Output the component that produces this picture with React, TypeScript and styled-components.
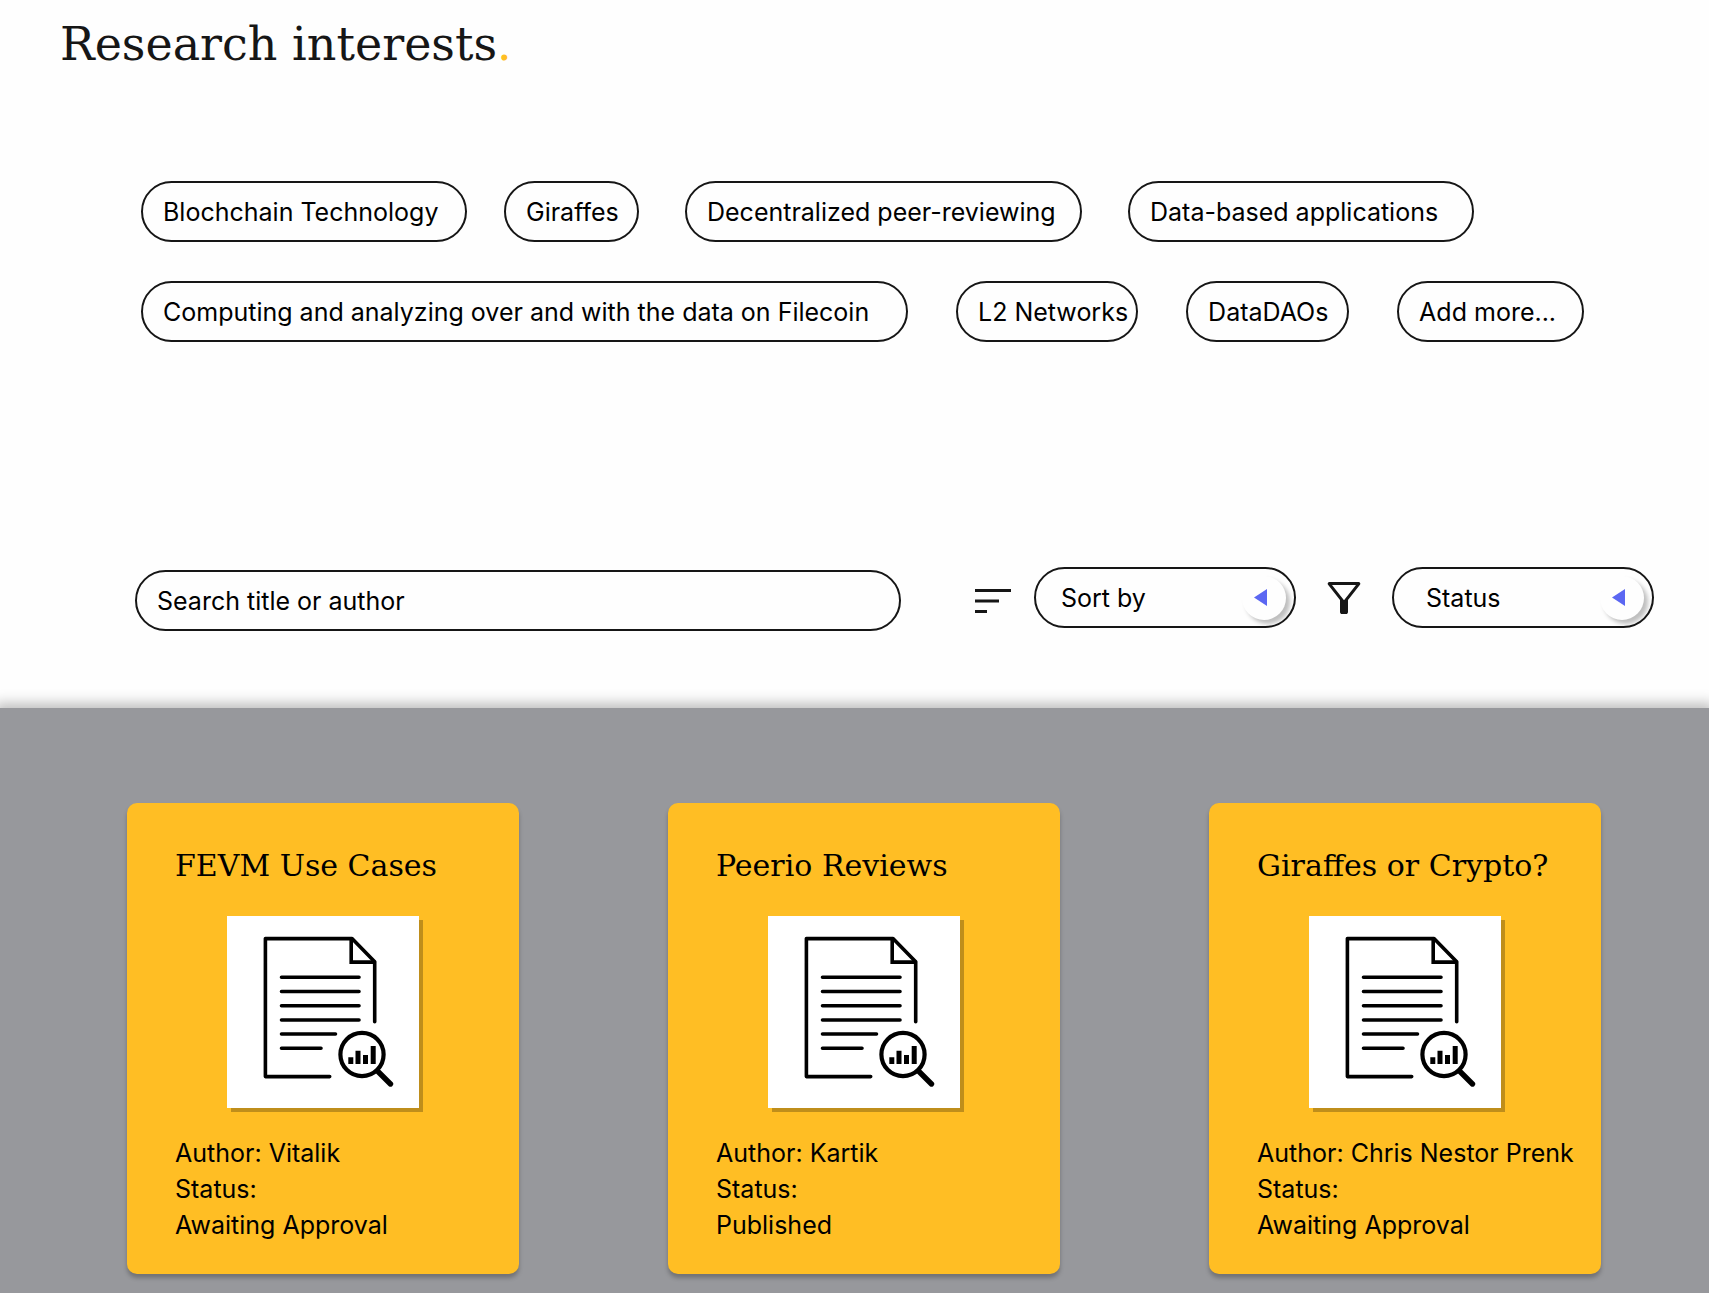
import React from "react";
import styled, { createGlobalStyle } from "styled-components";

const ink = "#161616";
const amber = "#ffbe24";
const sans = `Inter, "Open Sans", sans-serif`;
const slab = `"DejaVu Serif", serif`;

const GlobalStyle = createGlobalStyle`
  *, *::before, *::after { box-sizing: border-box; }
  body {
    margin: 0;
    background: #fefefe;
    color: #000;
    font-family: ${sans};
    font-size: 25px;
    line-height: 36px;
  }
`;

const Page = styled.main`
  display: flex;
  flex-direction: column;
  min-height: 100vh;
`;

const Heading = styled.h1`
  margin: 0;
  padding: 12px 60px 0;
  color: ${ink};
  font-family: ${slab};
  font-size: 46px;
  font-weight: 400;
  line-height: 64px;
`;

const Dot = styled.span`
  color: ${amber};
`;

const Interests = styled.section`
  display: flex;
  flex-direction: column;
  gap: 39px;
  padding: 105px 60px 0 141px;
`;

const TagRow = styled.div`
  display: flex;
`;

const Tag = styled.button<{ $width: number; $after: number }>`
  min-width: ${(p) => p.$width}px;
  height: 61px;
  margin: 0 ${(p) => p.$after}px 0 0;
  padding: 0 8px 0 20px;
  border: 2px solid ${ink};
  border-radius: 31px;
  background: transparent;
  color: inherit;
  font: inherit;
  text-align: left;
  white-space: nowrap;
  cursor: pointer;
`;

const Controls = styled.form`
  display: flex;
  gap: 17px;
  height: 64px;
  margin: 225px 55px 77px 135px;
`;

const SearchGroup = styled.div`
  display: flex;
  flex: 1;
  align-items: center;
  align-self: flex-end;
  gap: 68px;
`;

const FilterGroup = styled.div`
  display: flex;
  align-items: center;
  align-self: flex-start;
  gap: 24px;
`;

const Search = styled.input`
  flex: 1;
  min-width: 0;
  height: 61px;
  padding: 0 20px;
  border: 2px solid ${ink};
  border-radius: 31px;
  background: transparent;
  color: inherit;
  font: inherit;
  &::placeholder {
    color: #000;
    opacity: 1;
  }
`;

const Icon = styled.svg`
  flex: none;
  width: 48px;
  height: 48px;
  fill: ${ink};
`;

const Picker = styled.div`
  display: grid;
  width: 262px;
  align-items: center;
`;

const Select = styled.select<{ $indent: number }>`
  grid-area: 1 / 1;
  width: 100%;
  height: 61px;
  padding: 0 60px 0 ${(p) => p.$indent}px;
  border: 2px solid ${ink};
  border-radius: 31px;
  appearance: none;
  background: transparent;
  color: inherit;
  font: inherit;
  cursor: pointer;
`;

const Knob = styled.span`
  display: grid;
  grid-area: 1 / 1;
  justify-self: end;
  place-items: center;
  width: 44px;
  height: 44px;
  margin-right: 10px;
  padding-right: 7px;
  border-radius: 50%;
  background: #fefefe;
  box-shadow: 4px 4px 4px rgba(0, 0, 0, 0.25);
  pointer-events: none;
`;

const Triangle = styled.svg`
  width: 13px;
  height: 17px;
  fill: #5b67f2;
`;

const Library = styled.section`
  display: grid;
  flex: 1;
  grid-template-columns: repeat(3, minmax(0, 392px));
  align-items: start;
  justify-content: space-between;
  padding: 95px 108px 19px 127px;
  background: #97989c;
  box-shadow: 0 0 12px 5px rgba(0, 0, 0, 0.25);
`;

const Card = styled.article`
  display: flex;
  flex-direction: column;
  padding: 43px 24px 31px 48px;
  border-radius: 10px;
  background: ${amber};
  box-shadow: 0 4px 4px rgba(0, 0, 0, 0.25);
`;

const Title = styled.h2`
  margin: 0;
  font-family: ${slab};
  font-size: 30px;
  font-weight: 400;
  line-height: 40px;
  white-space: nowrap;
`;

const Cover = styled.svg`
  width: 192px;
  height: 192px;
  margin: 30px 0 27px 52px;
  background: #fff;
  box-shadow: 4px 4px 0 rgba(0, 0, 0, 0.25);
`;

const Meta = styled.p`
  margin: 0;
  white-space: nowrap;
`;

const tagRows = [
  [
    { label: "Blochchain Technology", width: 326, after: 37 },
    { label: "Giraffes", width: 135, after: 46 },
    { label: "Decentralized peer-reviewing", width: 397, after: 46 },
    { label: "Data-based applications", width: 346, after: 0 },
  ],
  [
    { label: "Computing and analyzing over and with the data on Filecoin", width: 767, after: 48 },
    { label: "L2 Networks", width: 182, after: 48 },
    { label: "DataDAOs", width: 163, after: 48 },
    { label: "Add more...", width: 187, after: 0 },
  ],
];

const papers = [
  { title: "FEVM Use Cases", author: "Vitalik", status: "Awaiting Approval" },
  { title: "Peerio Reviews", author: "Kartik", status: "Published" },
  { title: "Giraffes or Crypto?", author: "Chris Nestor Prenk", status: "Awaiting Approval" },
];

function PaperCover() {
  return (
    <Cover viewBox="0 0 192 192" aria-hidden="true">
      <g fill="none" stroke="#000" strokeWidth="3.6" strokeLinecap="round">
        <path strokeLinejoin="round" d="M102.7 160.6H38.4V22.6h86.6l22.7 23.2v59.9" />
        <path d="M124.2 22.8v23.3h23.2" />
        <path d="M54.5 61.3H132M54.5 75.5H132M54.5 89.7H132M54.5 104H132M54.5 118h54M54.5 132.3H94" />
        <circle cx="135" cy="138.5" r="21.6" strokeWidth="4.2" />
        <path strokeWidth="5.4" d="M150.5 155l13 13" />
      </g>
      <path d="M121.3 141.3h5v6.7h-5zM128.5 134.7h5V148h-5zM136 139h5v9h-5zM143.7 130h5v18h-5z" />
    </Cover>
  );
}

function Dropdown({ label, indent, options }: { label: string; indent: number; options: string[] }) {
  return (
    <Picker>
      <Select aria-label={label} $indent={indent} defaultValue="">
        <option value="">{label}</option>
        {options.map((o) => (
          <option key={o}>{o}</option>
        ))}
      </Select>
      <Knob>
        <Triangle viewBox="0 0 13 17" aria-hidden="true">
          <path d="M0 8.5 13 0v17z" />
        </Triangle>
      </Knob>
    </Picker>
  );
}

export default function App() {
  return (
    <Page>
      <GlobalStyle />
      <Heading>
        Research interests<Dot>.</Dot>
      </Heading>
      <Interests>
        {tagRows.map((row, i) => (
          <TagRow key={i}>
            {row.map((t) => (
              <Tag key={t.label} type="button" $width={t.width} $after={t.after}>
                {t.label}
              </Tag>
            ))}
          </TagRow>
        ))}
      </Interests>
      <Controls>
        <SearchGroup>
          <Search type="text" placeholder="Search title or author" aria-label="Search title or author" />
          <Icon viewBox="0 0 48 48" aria-hidden="true">
            <path d="M6 36v-3h12v3Zm0-10.5v-3h24v3ZM6 15v-3h36v3Z" />
          </Icon>
        </SearchGroup>
        <FilterGroup>
          <Dropdown label="Sort by" indent={25} options={["Title", "Author"]} />
          <Icon viewBox="0 0 48 48" aria-hidden="true">
            <path d="M22 40q-.85 0-1.425-.575Q20 38.85 20 38V26L8.05 10.75q-.7-.85-.2-1.8Q8.35 8 9.4 8h29.2q1.05 0 1.55.95.5.95-.2 1.8L28 26v12q0 .85-.575 1.425Q26.85 40 26 40Zm2-13.8L36 11H12Z" />
          </Icon>
          <Dropdown label="Status" indent={32} options={["Awaiting Approval", "Published"]} />
        </FilterGroup>
      </Controls>
      <Library>
        {papers.map((p) => (
          <Card key={p.title}>
            <Title>{p.title}</Title>
            <PaperCover />
            <Meta>Author: {p.author}</Meta>
            <Meta>Status:</Meta>
            <Meta>{p.status}</Meta>
          </Card>
        ))}
      </Library>
    </Page>
  );
}
